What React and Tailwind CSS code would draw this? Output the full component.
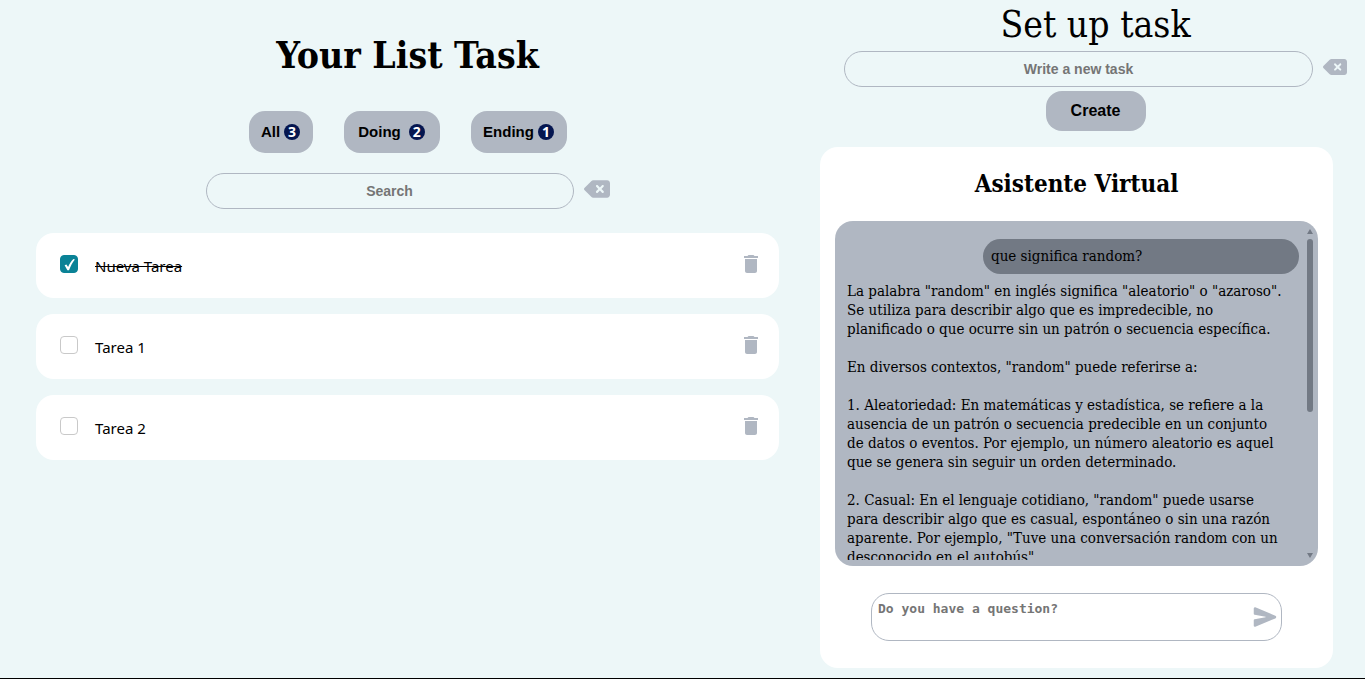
import { useState } from "react";
import { FaDeleteLeft } from "react-icons/fa6";
import { MdDelete } from "react-icons/md";
import { IoSend } from "react-icons/io5";

const filters = [
  { label: "All", count: 3, style: "w-16 gap-1" },
  { label: "Doing", count: 2, style: "w-24 gap-2" },
  { label: "Ending", count: 1, style: "w-24 gap-1" },
];

const initialTasks = [
  { id: 1, title: "Nueva Tarea", done: true },
  { id: 2, title: "Tarea 1", done: false },
  { id: 3, title: "Tarea 2", done: false },
];

const answer = [
  `La palabra "random" en inglés significa "aleatorio" o "azaroso".
Se utiliza para describir algo que es impredecible, no
planificado o que ocurre sin un patrón o secuencia específica.`,
  `En diversos contextos, "random" puede referirse a:`,
  `1. Aleatoriedad: En matemáticas y estadística, se refiere a la
ausencia de un patrón o secuencia predecible en un conjunto
de datos o eventos. Por ejemplo, un número aleatorio es aquel
que se genera sin seguir un orden determinado.`,
  `2. Casual: En el lenguaje cotidiano, "random" puede usarse
para describir algo que es casual, espontáneo o sin una razón
aparente. Por ejemplo, "Tuve una conversación random con un
desconocido en el autobús"`,
];

function TextField({ label }) {
  return (
    <input
      type="text"
      aria-label={label}
      placeholder={label}
      className="h-9 min-w-0 flex-1 rounded-[18px] border border-[#b0b7c2] bg-transparent px-4 text-center font-['Liberation_Sans',sans-serif] text-sm font-bold placeholder:text-[#757575]"
    />
  );
}

function TaskRow({ task, onToggle, onDelete }) {
  const id = `task-${task.id}`;
  return (
    <li className="flex h-[65px] items-center rounded-[18px] bg-white px-6 pb-[3px]">
      <span className="relative flex size-[18px]">
        <input
          id={id}
          type="checkbox"
          checked={task.done}
          onChange={onToggle}
          className="size-[18px] appearance-none rounded border border-[#c9c9c9] bg-white checked:border-[#0a8296] checked:bg-[#0a8296]"
        />
        {task.done && (
          <svg viewBox="0 0 18 18" className="pointer-events-none absolute inset-0 size-[18px]" aria-hidden="true">
            <path d="M4.6 10.2 L6.4 9.4 L8.1 12 C9.4 9 11 6.4 13.4 4 L14.9 4.4 C12.6 7.2 10.6 10.8 9 15.2 L7.4 15.2 Z" fill="#fff" />
          </svg>
        )}
      </span>
      <label
        htmlFor={id}
        className={`ml-[17px] flex-1 pt-1 font-['Noto_Sans',sans-serif] text-[15px] leading-5 ${task.done ? "line-through" : ""}`}
      >
        {task.title}
      </label>
      <button type="button" aria-label={`Delete ${task.title}`} onClick={onDelete} className="-mr-2 text-[#b0b7c2]">
        <MdDelete size={24} />
      </button>
    </li>
  );
}

export default function App() {
  const [tasks, setTasks] = useState(initialTasks);
  const toggle = (id) => setTasks(tasks.map((t) => (t.id === id ? { ...t, done: !t.done } : t)));
  const remove = (id) => setTasks(tasks.filter((t) => t.id !== id));

  return (
    <div className="grid min-h-screen grid-cols-[3fr_2fr] border-b border-black bg-[#edf7f8] font-['DejaVu_Serif_Condensed','DejaVu_Serif',serif] text-black">
      <main className="flex flex-col items-center pt-7 pr-10 pl-9">
        <h1 className="text-[37px] leading-[54px] font-bold">Your List Task</h1>
        <div className="mt-[29px] flex gap-[31px]">
          {filters.map((f) => (
            <button
              key={f.label}
              type="button"
              className={`flex h-[42px] items-center justify-center rounded-2xl bg-[#b0b7c2] font-['Liberation_Sans',sans-serif] text-[15px] font-bold ${f.style}`}
            >
              {f.label}
              <span className="flex size-4 items-center justify-center rounded-full bg-[#051650] font-['Noto_Sans',sans-serif] text-sm leading-4 text-white">
                {f.count}
              </span>
            </button>
          ))}
        </div>
        <div className="mt-5 flex w-full max-w-[404px] items-center gap-2.5">
          <TextField label="Search" />
          <button type="button" aria-label="Clear search" className="pb-1 text-[#b0b7c2]">
            <FaDeleteLeft className="h-6 w-[26px]" />
          </button>
        </div>
        <ul className="mt-6 flex w-full flex-col gap-4">
          {tasks.map((t) => (
            <TaskRow key={t.id} task={t} onToggle={() => toggle(t.id)} onDelete={() => remove(t.id)} />
          ))}
        </ul>
      </main>

      <aside className="flex flex-col pb-2.5">
        <section className="flex flex-col items-center pr-[18px] pl-[25px]">
          <h2 className="text-[37px] leading-[50px]">Set up task</h2>
          <div className="mt-px flex w-full items-center gap-2.5">
            <TextField label="Write a new task" />
            <button type="button" aria-label="Clear new task" className="pb-1 text-[#b0b7c2]">
              <FaDeleteLeft size={24} />
            </button>
          </div>
          <button
            type="button"
            className="mt-1 h-10 w-[100px] rounded-2xl bg-[#b0b7c2] font-['Liberation_Sans',sans-serif] text-base font-bold"
          >
            Create
          </button>
        </section>

        <section className="mt-4 mr-8 ml-px flex flex-1 flex-col rounded-[18px] bg-white px-[15px] pt-4">
          <h2 className="text-center text-2xl leading-[42px] font-bold">Asistente Virtual</h2>
          <div className="mt-4 flex h-[345px] rounded-[18px] bg-[#b0b7c2] pr-[5px] pb-1.5 pl-3">
            <div className="flex min-w-0 flex-1 flex-col overflow-hidden pt-[18px] text-[15px] leading-[19px]">
              <p className="mr-2 w-[316px] shrink-0 self-end rounded-[18px] bg-[#727984] p-2">que significa random?</p>
              <div className="flex flex-col gap-[19px] pt-2 whitespace-pre">
                {answer.map((p) => (
                  <p key={p}>{p}</p>
                ))}
              </div>
            </div>
            <div className="flex w-1.5 flex-col items-center pt-2 pb-0.5" aria-hidden="true">
              <svg viewBox="0 0 6 5" className="h-[5px] w-1.5 shrink-0" fill="#727984">
                <path d="M3 0 6 5H0Z" />
              </svg>
              <span className="mt-[5px] h-[173px] w-1.5 rounded-full bg-[#727984]" />
              <svg viewBox="0 0 6 5" className="mt-auto h-[5px] w-1.5 shrink-0" fill="#727984">
                <path d="M0 0H6L3 5Z" />
              </svg>
            </div>
          </div>
          <form
            className="mx-9 mt-[27px] flex h-12 items-center rounded-[18px] border border-[#b0b7c2] pr-1 pl-1.5"
            onSubmit={(e) => e.preventDefault()}
          >
            <textarea
              aria-label="Do you have a question?"
              placeholder="Do you have a question?"
              className="h-full min-w-0 flex-1 resize-none overflow-hidden bg-transparent pt-[7px] font-['DejaVu_Sans_Mono',monospace] text-[13px] leading-4 font-bold placeholder:text-[#757575]"
            />
            <button type="submit" aria-label="Send" className="text-[#b0b7c2]">
              <IoSend size={24} />
            </button>
          </form>
        </section>
      </aside>
    </div>
  );
}
